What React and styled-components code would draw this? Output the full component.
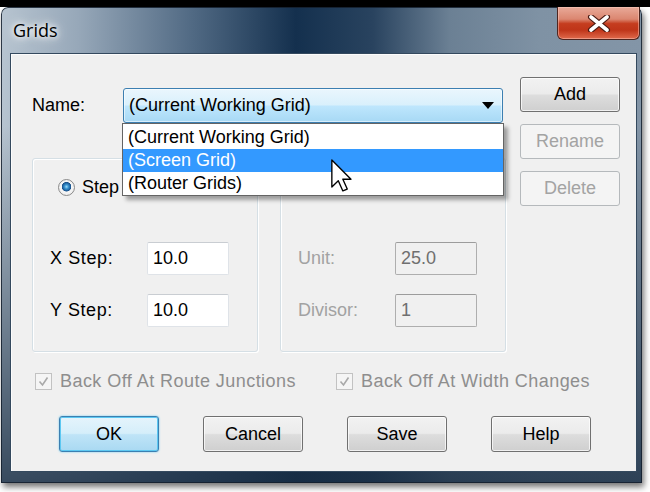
import React from 'react';
import styled, { createGlobalStyle } from 'styled-components';

const GlobalStyle = createGlobalStyle`
  html, body {
    margin: 0;
    padding: 0;
  }
  body {
    width: 650px;
    height: 492px;
    overflow: hidden;
    background: #fff;
    font-family: "Liberation Sans", Arial, sans-serif;
  }
`;

const Screen = styled.div`
  width: 650px;
  height: 492px;
  box-sizing: border-box;
  padding-top: 7px;
  background: linear-gradient(#000 0, #000 7px, #fff 7px);
`;

const Window = styled.div`
  margin-left: 1px;
  width: 641px;
  height: 476px;
  display: flex;
  flex-direction: column;
  border-radius: 7px 7px 0 0;
  background:
    linear-gradient(to bottom, rgba(22, 42, 64, 0) 0, rgba(22, 42, 64, 0) 25%, rgba(24, 44, 66, 0.8) 100%),
    linear-gradient(to right, #b7c4d0 0%, #97a8b9 12%, #506983 30%, #14304e 46%, #29435f 58%, #6b8094 70%, #7f92a4 84%, #8395a7 100%);
  box-shadow: 2px 4px 6px rgba(0, 0, 0, 0.55), inset 0 0 0 1px rgba(20, 30, 45, 0.85);
`;

const TitleBar = styled.div`
  height: 46px;
  display: flex;
  justify-content: space-between;
  padding-left: 12px;
`;

const Title = styled.span`
  align-self: center;
  font-family: "Open Sans", "Noto Sans", sans-serif;
  font-size: 18px;
  color: #000;
  text-shadow: 0 0 5px #fff, 0 0 9px #fff, 0 0 14px rgba(255, 255, 255, 0.9);
`;

const CloseButton = styled.div`
  width: 83px;
  height: 33px;
  margin-right: 2px;
  box-sizing: border-box;
  display: flex;
  align-items: center;
  justify-content: center;
  border: 1px solid #4e2620;
  border-top: none;
  border-radius: 0 0 6px 6px;
  background: linear-gradient(to bottom, #e9aa99 0%, #db8670 38%, #c53d1f 52%, #bf3519 72%, #e06a4c 100%);
  box-shadow: inset 0 0 0 1px rgba(255, 210, 200, 0.45);
`;

const Client = styled.div`
  margin: 0 5px 0 9px;
  height: 419px;
  box-sizing: border-box;
  border: 1px solid #34495e;
  box-shadow: inset 1px 1px 0 #fcfcfc;
  background: #f0f0f0;
  padding: 23px 0 0 21px;
  font-size: 18px;
  color: #000;
`;

const TopSection = styled.div`
  display: flex;
  gap: 14px;
`;

const LeftColumn = styled.div`
  width: 474px;
  padding-top: 11px;
`;

const RightColumn = styled.div`
  width: 100px;
  display: flex;
  flex-direction: column;
  gap: 12px;
`;

const NameRow = styled.div`
  display: flex;
  align-items: center;
  height: 35px;
`;

const Label = styled.span`
  width: ${p => p.$width || 91}px;
  flex: none;
  color: ${p => (p.$disabled ? '#a2a2a2' : '#000')};
  letter-spacing: ${p => (p.$wide ? '0.6px' : '0')};
  white-space: nowrap;
`;

const ComboWrap = styled.div`
  position: relative;
  width: 380px;
  height: 35px;
`;

const Combo = styled.div`
  height: 100%;
  box-sizing: border-box;
  display: flex;
  align-items: center;
  justify-content: space-between;
  padding: 0 8px 0 5px;
  border: 1px solid #3c7fb1;
  border-radius: 3px;
  background: linear-gradient(to bottom, #eaf6fd 0%, #d9f0fc 48%, #bee6fd 52%, #a7d9f5 100%);
  box-shadow: inset 0 0 0 1px rgba(255, 255, 255, 0.55);
`;

const Dropdown = styled.ul`
  position: absolute;
  top: 100%;
  left: -1px;
  width: 382px;
  margin: 0;
  padding: 2px 0 0;
  list-style: none;
  box-sizing: border-box;
  border: 1px solid #646464;
  background: #fff;
  box-shadow: 4px 4px 4px rgba(0, 0, 0, 0.35);
  z-index: 5;
`;

const Option = styled.li`
  height: 23px;
  line-height: 23px;
  padding-left: 5px;
  background: ${p => (p.$selected ? '#3399ff' : 'transparent')};
  color: ${p => (p.$selected ? '#fff' : '#000')};
`;

const Cursor = styled.svg`
  position: absolute;
  left: 208px;
  top: 35px;
`;

const GroupRow = styled.div`
  margin-top: 35px;
  display: grid;
  grid-template-columns: 226px 226px;
  gap: 22px;
  height: 194px;
`;

const Group = styled.div`
  box-sizing: border-box;
  border: 1px solid #d5dfe5;
  border-radius: 3px;
  box-shadow: inset 1px 1px 0 #fff, 1px 1px 0 #fff;
  padding: 20px 0 0 17px;
`;

const RadioRow = styled.div`
  display: flex;
  align-items: center;
  gap: 7px;
  height: 17px;
  margin-left: 8px;
`;

const Radio = styled.span`
  width: 17px;
  height: 17px;
  box-sizing: border-box;
  border-radius: 50%;
  border: 1px solid #8a8a8a;
  background: radial-gradient(circle at 50% 45%, #9fdcf8 0, #3a94d0 2px, #1c5c98 4px, #1a4f86 4.5px, #f6f6f6 5px, #e6e6e6 100%);
`;

const Fields = styled.div`
  margin-top: 46px;
  display: flex;
  flex-direction: column;
  gap: 19px;
`;

const FieldRow = styled.div`
  display: flex;
  align-items: center;
  height: 33px;
`;

const TextBox = styled.input`
  width: 82px;
  height: 33px;
  box-sizing: border-box;
  margin: 0;
  padding: 0 5px;
  font: inherit;
  font-size: 18px;
  outline: none;
  border-radius: 2px;
  border: 1px solid ${p => (p.disabled ? '#aeaeae' : '#dfe3e8')};
  border-top-color: ${p => (p.disabled ? '#9c9c9c' : '#c9cdd2')};
  background: ${p => (p.disabled ? '#f0f0f0' : '#fff')};
  color: ${p => (p.disabled ? '#6f6f6f' : '#000')};
`;

const CheckRow = styled.div`
  margin-top: 19px;
  height: 20px;
  display: grid;
  grid-template-columns: 301px auto;
  padding-left: 3px;
`;

const CheckItem = styled.label`
  display: flex;
  align-items: center;
  gap: 8px;
  color: #8e8e8e;
  letter-spacing: 0.45px;
  white-space: nowrap;
`;

const CheckBox = styled.span`
  width: 17px;
  height: 17px;
  box-sizing: border-box;
  border: 1px solid #c2c2c2;
  background: #f5f5f5;
  display: flex;
  align-items: center;
  justify-content: center;
`;

const ButtonRow = styled.div`
  margin-top: 25px;
  display: flex;
  gap: 44px;
  padding-left: 27px;
`;

const Button = styled.button`
  width: 100px;
  height: ${p => p.$height || 35}px;
  box-sizing: border-box;
  padding: 0;
  font-family: inherit;
  font-size: 18px;
  color: ${p => (p.disabled ? '#a3a3a3' : '#000')};
  border-radius: 3px;
  border: 1px solid ${p => (p.disabled ? '#b5b9bc' : p.$primary ? '#3c7fb1' : '#707070')};
  background: ${p =>
    p.disabled
      ? '#f4f4f4'
      : p.$primary
      ? 'linear-gradient(to bottom, #e5f4fc 0%, #d5eefa 48%, #bfe4f7 52%, #a9d9f2 100%)'
      : 'linear-gradient(to bottom, #f2f2f2 0%, #ebebeb 48%, #dddddd 52%, #cfcfcf 100%)'};
  box-shadow: ${p =>
    p.$primary
      ? 'inset 0 0 0 1px #5cc8f2, 0 0 2px #5cc8f2'
      : p.disabled
      ? 'none'
      : 'inset 0 0 0 1px rgba(255,255,255,0.7)'};
`;

function Check() {
  return (
    <CheckBox>
      <svg width="11" height="11" viewBox="0 0 11 11">
        <path d="M1.5 5.5 L4.5 9 L9.5 1.5" fill="none" stroke="#a9a9a9" strokeWidth="1.6" />
      </svg>
    </CheckBox>
  );
}

export default function App() {
  return (
    <>
      <GlobalStyle />
      <Screen>
        <Window>
          <TitleBar>
            <Title>Grids</Title>
            <CloseButton>
              <svg width="26" height="17" viewBox="0 0 26 17">
                <path d="M5 2 L21 15 M21 2 L5 15" stroke="#4a1a12" strokeWidth="6" strokeLinecap="round" />
                <path d="M5 2 L21 15 M21 2 L5 15" stroke="#fff" strokeWidth="3.6" strokeLinecap="round" />
              </svg>
            </CloseButton>
          </TitleBar>
          <Client>
            <TopSection>
              <LeftColumn>
                <NameRow>
                  <Label>Name:</Label>
                  <ComboWrap>
                    <Combo>
                      <span>(Current Working Grid)</span>
                      <svg width="12" height="7" viewBox="0 0 12 7">
                        <polygon points="0,0 12,0 6,7" fill="#000" />
                      </svg>
                    </Combo>
                    <Dropdown>
                      <Option>(Current Working Grid)</Option>
                      <Option $selected>(Screen Grid)</Option>
                      <Option>(Router Grids)</Option>
                      <Cursor width="21" height="34" viewBox="0 0 12.4 20">
                        <path
                          d="M0.5 0.5 L0.5 16.5 L4.3 12.8 L7 18.8 L9.6 17.7 L7 11.9 L11.8 11.9 Z"
                          fill="#fff"
                          stroke="#000"
                          strokeWidth="0.8"
                          strokeLinejoin="round"
                        />
                      </Cursor>
                    </Dropdown>
                  </ComboWrap>
                </NameRow>
                <GroupRow>
                  <Group>
                    <RadioRow>
                      <Radio />
                      <span>Step</span>
                    </RadioRow>
                    <Fields>
                      <FieldRow>
                        <Label $width={97} $wide>X Step:</Label>
                        <TextBox value="10.0" readOnly />
                      </FieldRow>
                      <FieldRow>
                        <Label $width={97} $wide>Y Step:</Label>
                        <TextBox value="10.0" readOnly />
                      </FieldRow>
                    </Fields>
                  </Group>
                  <Group>
                    <RadioRow>
                      <Radio />
                    </RadioRow>
                    <Fields>
                      <FieldRow>
                        <Label $width={97} $disabled>Unit:</Label>
                        <TextBox value="25.0" disabled readOnly />
                      </FieldRow>
                      <FieldRow>
                        <Label $width={97} $disabled>Divisor:</Label>
                        <TextBox value="1" disabled readOnly />
                      </FieldRow>
                    </Fields>
                  </Group>
                </GroupRow>
              </LeftColumn>
              <RightColumn>
                <Button>Add</Button>
                <Button disabled>Rename</Button>
                <Button disabled>Delete</Button>
              </RightColumn>
            </TopSection>
            <CheckRow>
              <CheckItem>
                <Check />
                Back Off At Route Junctions
              </CheckItem>
              <CheckItem>
                <Check />
                Back Off At Width Changes
              </CheckItem>
            </CheckRow>
            <ButtonRow>
              <Button $primary $height={36}>OK</Button>
              <Button $height={36}>Cancel</Button>
              <Button $height={36}>Save</Button>
              <Button $height={36}>Help</Button>
            </ButtonRow>
          </Client>
        </Window>
      </Screen>
    </>
  );
}
